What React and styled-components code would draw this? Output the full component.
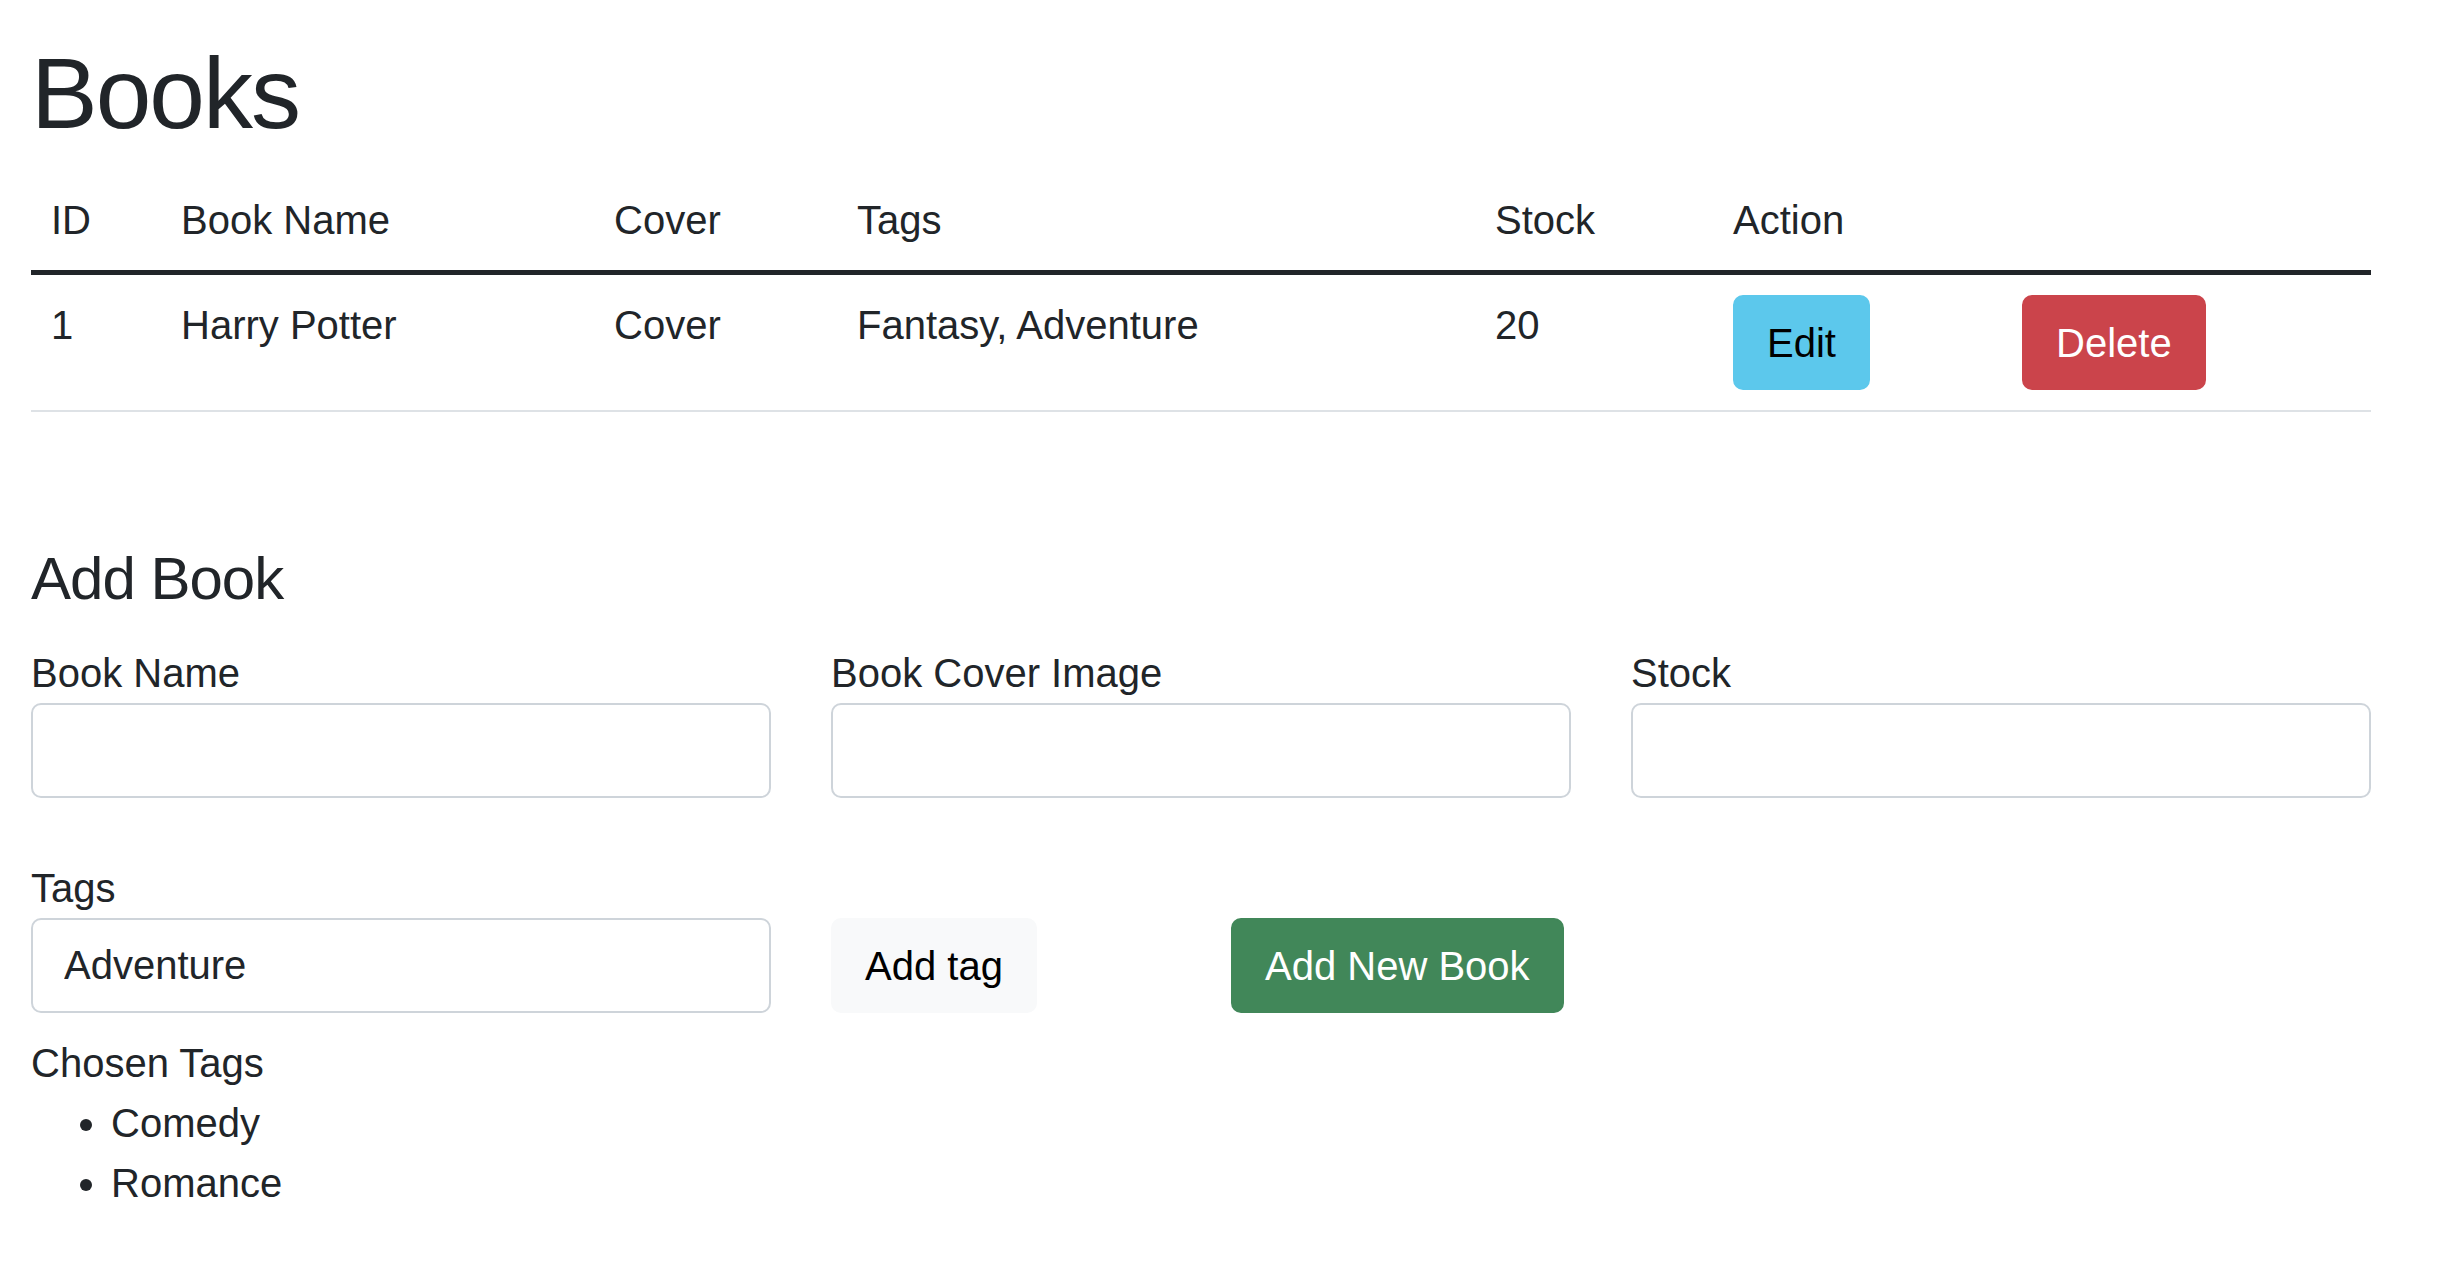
import styled, { createGlobalStyle } from "styled-components";

const GlobalStyle = createGlobalStyle`
  body {
    margin: 0;
    background: #fff;
    color: #212529;
    font-family: "Liberation Sans", Arial, sans-serif;
    font-size: 40px;
    line-height: 60px;
  }
  * {
    box-sizing: border-box;
  }
`;

const Page = styled.div`
  width: 2340px;
  margin-left: 31px;
  padding: 33px 0 40px;
`;

const Title = styled.h1`
  margin: 0 0 17px;
  font-size: 100px;
  line-height: 120px;
  font-weight: 500;
  letter-spacing: -2px;
`;

const Table = styled.table`
  width: 100%;
  table-layout: fixed;
  border-collapse: separate;
  border-spacing: 0;
  margin: 0 0 40px;
`;

const HeadCell = styled.th`
  padding: 20px;
  text-align: left;
  font-weight: normal;
  vertical-align: top;
  border-bottom: 5px solid #212529;
`;

const Cell = styled.td`
  padding: 20px;
  vertical-align: top;
  border-bottom: 2px solid #dee2e6;
`;

const variants = {
  info: { bg: "#5cc8ec", fg: "#000" },
  danger: { bg: "#cb444b", fg: "#fff" },
  success: { bg: "#418759", fg: "#fff" },
  light: { bg: "#f8f9fa", fg: "#000" },
};

const Button = styled.button`
  height: 95px;
  padding: 0 32px;
  border: 2px solid ${(p) => variants[p.$variant].bg};
  border-radius: 10px;
  background: ${(p) => variants[p.$variant].bg};
  color: ${(p) => variants[p.$variant].fg};
  font-family: inherit;
  font-size: 40px;
  line-height: 60px;
  cursor: pointer;
`;

const AddSection = styled.section`
  padding-top: 91px;
`;

const SectionTitle = styled.h4`
  margin: 0 0 28px;
  font-size: 60px;
  line-height: 72px;
  font-weight: 500;
  letter-spacing: -1px;
`;

const FieldGrid = styled.div`
  display: grid;
  grid-template-columns: repeat(3, 1fr);
  column-gap: 60px;
`;

const TagRow = styled.div`
  display: grid;
  grid-template-columns: 740px 340px auto;
  column-gap: 60px;
  align-items: end;
  justify-items: start;
  margin-top: 60px;
`;

const Field = styled.div`
  display: flex;
  flex-direction: column;
  width: 100%;
`;

const Label = styled.label`
  display: block;
  line-height: 60px;
`;

const Input = styled.input`
  width: 100%;
  height: 95px;
  padding: 0 31px;
  border: 2px solid #ced4da;
  border-radius: 10px;
  background: #fff;
  color: #212529;
  font-family: inherit;
  font-size: 40px;
  outline: none;
`;

const ChosenTitle = styled.p`
  margin: 20px 0 0;
`;

const TagList = styled.ul`
  margin: 0;
  padding-left: 80px;
`;

const books = [
  { id: 1, name: "Harry Potter", cover: "Cover", tags: "Fantasy, Adventure", stock: 20 },
];

const widths = [130, 433, 243, 638, 238, 289, 369];

export default function App() {
  return (
    <>
      <GlobalStyle />
      <Page>
        <Title>Books</Title>
        <Table>
          <colgroup>
            {widths.map((w, i) => (
              <col key={i} style={{ width: w }} />
            ))}
          </colgroup>
          <thead>
            <tr>
              <HeadCell>ID</HeadCell>
              <HeadCell>Book Name</HeadCell>
              <HeadCell>Cover</HeadCell>
              <HeadCell>Tags</HeadCell>
              <HeadCell>Stock</HeadCell>
              <HeadCell>Action</HeadCell>
              <HeadCell></HeadCell>
            </tr>
          </thead>
          <tbody>
            {books.map((b) => (
              <tr key={b.id}>
                <Cell>{b.id}</Cell>
                <Cell>{b.name}</Cell>
                <Cell>{b.cover}</Cell>
                <Cell>{b.tags}</Cell>
                <Cell>{b.stock}</Cell>
                <Cell>
                  <Button $variant="info">Edit</Button>
                </Cell>
                <Cell>
                  <Button $variant="danger">Delete</Button>
                </Cell>
              </tr>
            ))}
          </tbody>
        </Table>

        <AddSection>
          <SectionTitle>Add Book</SectionTitle>
          <FieldGrid>
            <Field>
              <Label>Book Name</Label>
              <Input type="text" />
            </Field>
            <Field>
              <Label>Book Cover Image</Label>
              <Input type="text" />
            </Field>
            <Field>
              <Label>Stock</Label>
              <Input type="text" />
            </Field>
          </FieldGrid>
          <TagRow>
            <Field>
              <Label>Tags</Label>
              <Input type="text" defaultValue="Adventure" />
            </Field>
            <Button $variant="light">Add tag</Button>
            <Button $variant="success">Add New Book</Button>
          </TagRow>
          <ChosenTitle>Chosen Tags</ChosenTitle>
          <TagList>
            <li>Comedy</li>
            <li>Romance</li>
          </TagList>
        </AddSection>
      </Page>
    </>
  );
}
